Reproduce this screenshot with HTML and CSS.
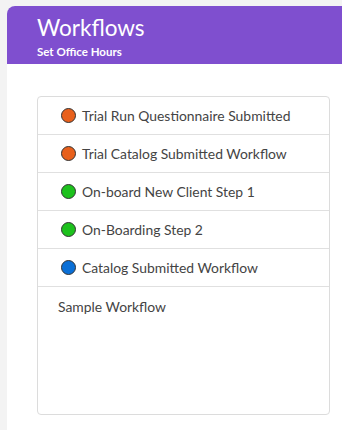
FILE: index.html
```html
<!DOCTYPE html>
<html lang="en">
<head>
    <meta charset="UTF-8">
    <meta name="viewport" content="width=device-width, initial-scale=1.0">
    <title>Workflows</title>
    <link rel="stylesheet" href="styles.css">
</head>
<body>
    <div class="card">
        <div class="header">
            <h1>Workflows</h1>
            <div class="subtitle">Set Office Hours</div>
        </div>
        <div class="content">
            <ul class="workflow-list">
                <li><span class="dot orange"></span>Trial Run Questionnaire Submitted</li>
                <li><span class="dot orange"></span>Trial Catalog Submitted Workflow</li>
                <li><span class="dot green"></span>On-board New Client Step 1</li>
                <li><span class="dot green"></span>On-Boarding Step 2</li>
                <li><span class="dot blue"></span>Catalog Submitted Workflow</li>
                <li class="plain">Sample Workflow</li>
            </ul>
        </div>
    </div>
</body>
</html>
```

FILE: styles.css
```css
body {
    font-family: Lato, "Open Sans", sans-serif;
    background-color: #f3f3f3;
    margin: 0;
    padding: 6px 0 0 7px;
    height: 430px;
    box-sizing: border-box;
    overflow: hidden;
}

.card {
    background-color: #ffffff;
    border-radius: 8px 0 0 0;
    height: 100%;
    display: flex;
    flex-direction: column;
}

.header {
    background-color: #7f4fcf;
    border-radius: 8px 0 0 0;
    padding: 9px 30px 5px;
    height: 58px;
    box-sizing: border-box;
    color: #ffffff;
}

h1 {
    margin: 0;
    font-size: 22.5px;
    font-weight: normal;
    line-height: 26px;
}

.subtitle {
    font-size: 11.5px;
    font-weight: bold;
    margin-top: 4px;
}

.content {
    flex: 1;
    padding: 32px 12px 15px 30px;
    display: flex;
}

.workflow-list {
    list-style: none;
    margin: 0;
    padding: 0;
    flex: 1;
    border: 1px solid #dcdcdc;
    border-radius: 4px;
}

.workflow-list li {
    height: 38px;
    box-sizing: border-box;
    border-bottom: 1px solid #e0e0e0;
    display: flex;
    align-items: center;
    padding-left: 23px;
    font-size: 13.9px;
    color: #444444;
}

.workflow-list li.plain {
    border-bottom: none;
    padding-left: 20px;
}

.dot {
    width: 13px;
    height: 13px;
    border-radius: 50%;
    border: 1px solid #333333;
    margin-right: 6px;
    flex-shrink: 0;
}

.orange {
    background-color: #e8601c;
}

.green {
    background-color: #1dc11d;
}

.blue {
    background-color: #0a6fd6;
}
```
